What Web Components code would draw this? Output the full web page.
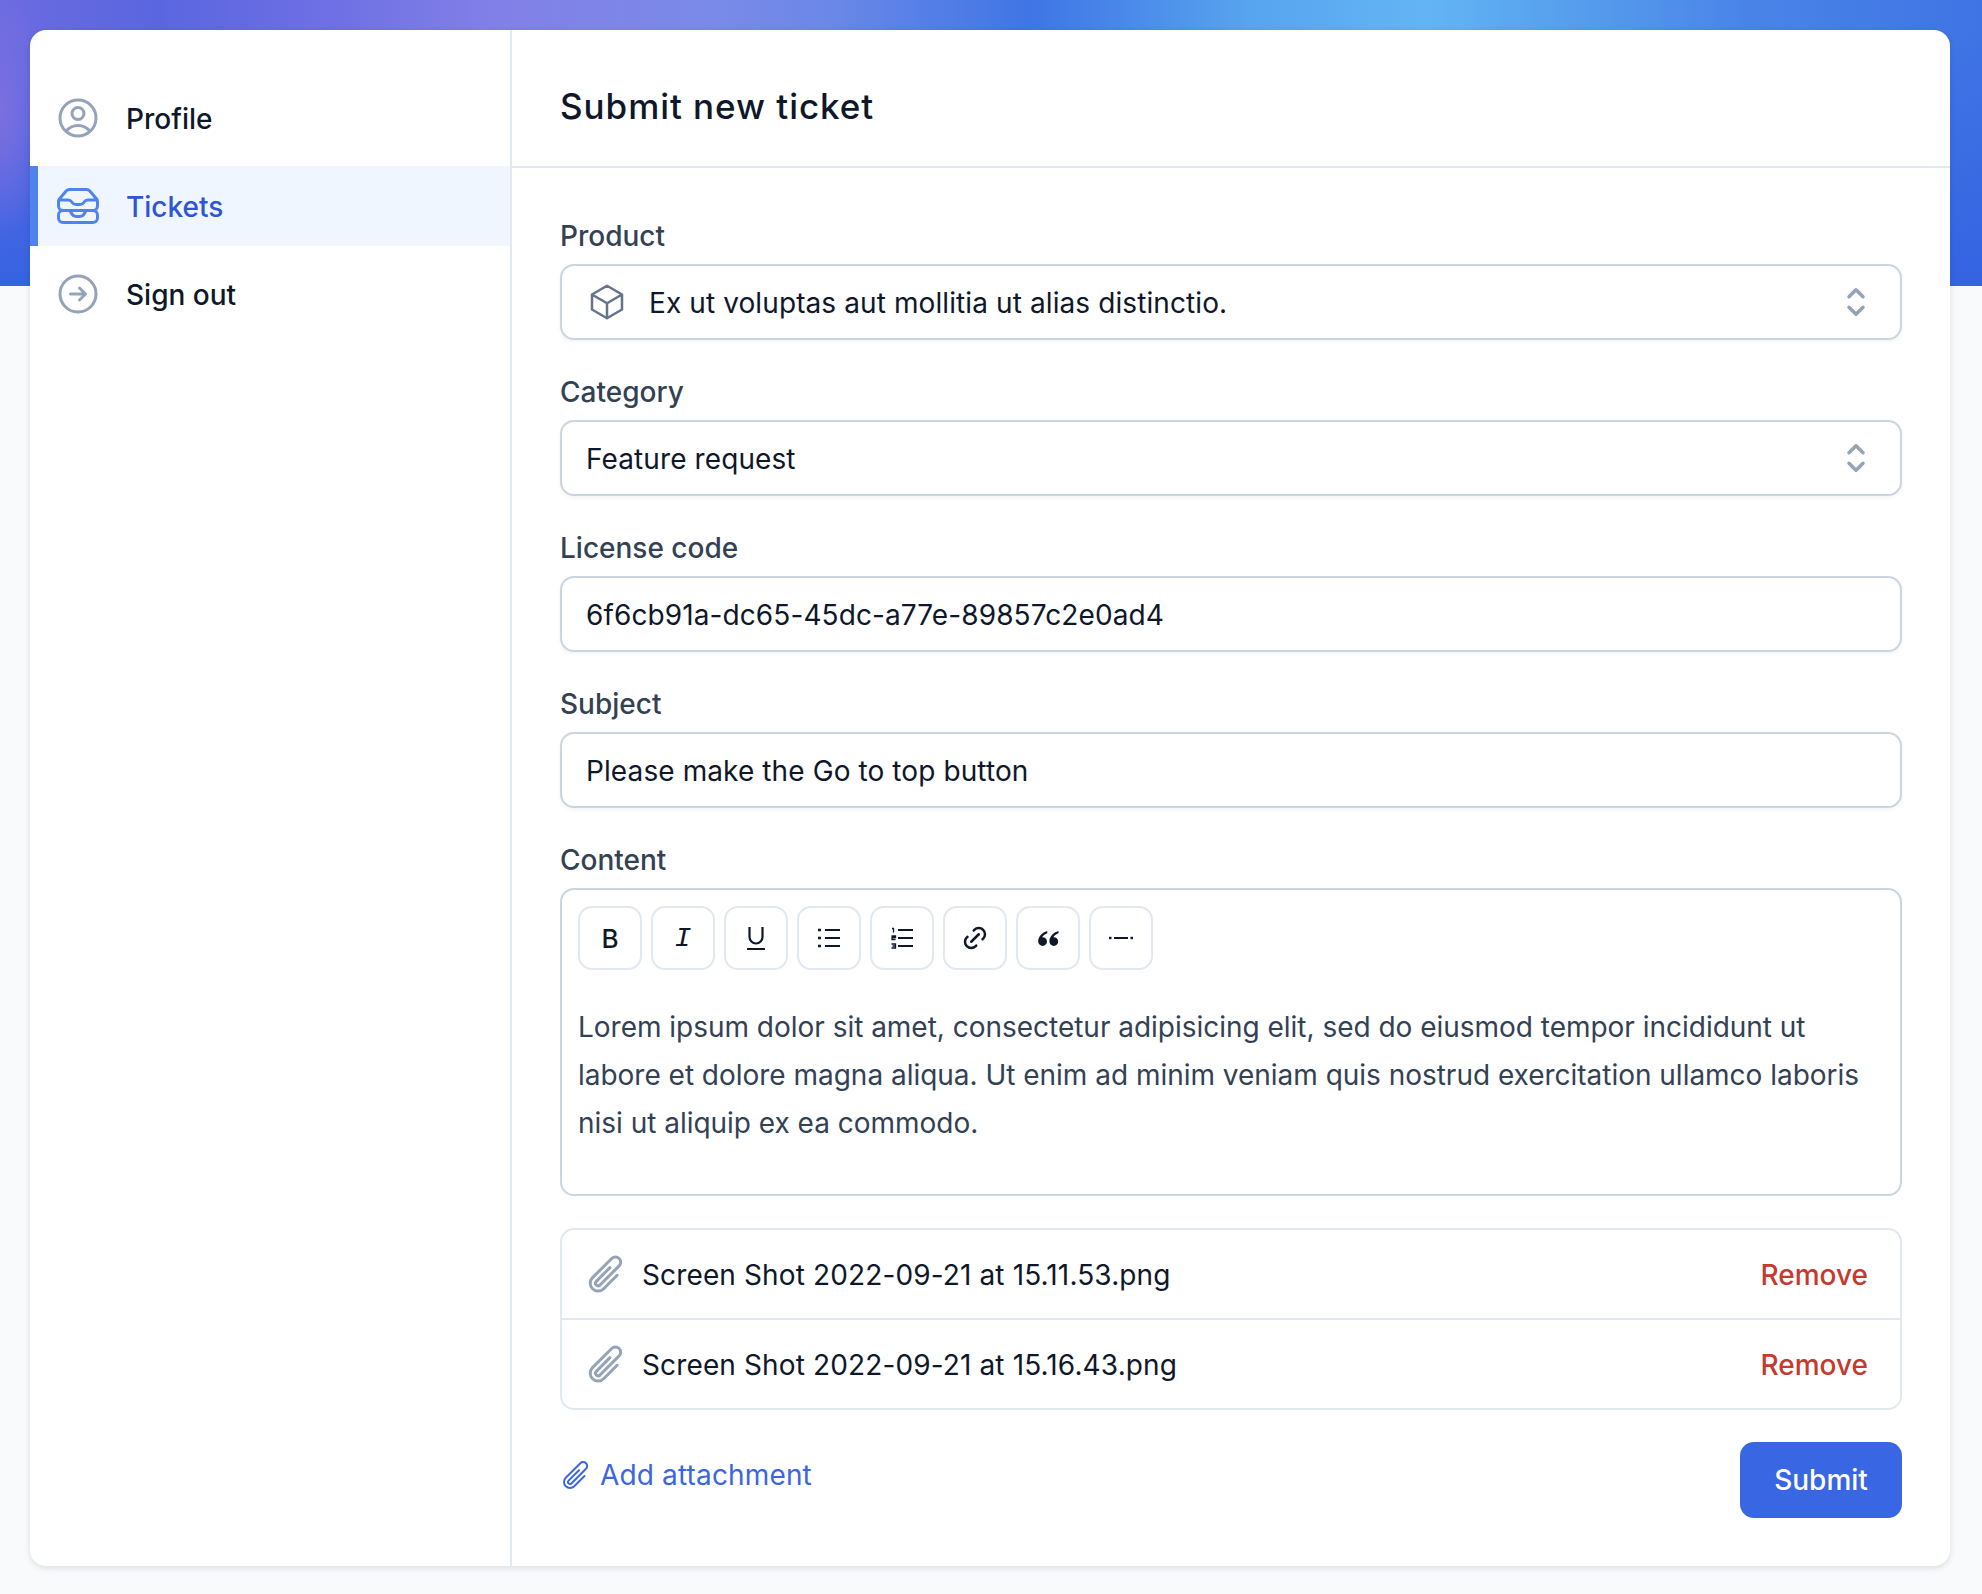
<!DOCTYPE html>
<html lang="en">
<head>
<meta charset="utf-8">
<title>Submit new ticket</title>
<style>
  html, body { margin: 0; padding: 0; }
  body {
    background: #f8fafc;
    font-family: Inter, "Liberation Sans", sans-serif;
    font-size: 28px;
    color: #0f172a;
  }
</style>
</head>
<body>

<ticket-page>
  <side-nav slot="nav">
    <nav-item icon="user">Profile</nav-item>
    <nav-item icon="inbox" active>Tickets</nav-item>
    <nav-item icon="exit">Sign out</nav-item>
  </side-nav>
  <ticket-form slot="main">
    <form-field label="Product">
      <box-input select icon="cube">Ex ut voluptas aut mollitia ut alias distinctio.</box-input>
    </form-field>
    <form-field label="Category">
      <box-input select>Feature request</box-input>
    </form-field>
    <form-field label="License code">
      <box-input>6f6cb91a-dc65-45dc-a77e-89857c2e0ad4</box-input>
    </form-field>
    <form-field label="Subject">
      <box-input>Please make the Go to top button</box-input>
    </form-field>
    <form-field label="Content">
      <rich-editor>Lorem ipsum dolor sit amet, consectetur adipisicing elit, sed do eiusmod tempor incididunt ut labore et dolore magna aliqua. Ut enim ad minim veniam quis nostrud exercitation ullamco laboris nisi ut aliquip ex ea commodo.</rich-editor>
    </form-field>
    <attachment-list>
      <attachment-row>Screen Shot 2022-09-21 at 15.11.53.png</attachment-row>
      <attachment-row>Screen Shot 2022-09-21 at 15.16.43.png</attachment-row>
    </attachment-list>
    <form-actions></form-actions>
  </ticket-form>
</ticket-page>

<script>
const ICONS = {
  user: 'M17.982 18.725A7.488 7.488 0 0012 15.75a7.488 7.488 0 00-5.982 2.975m11.963 0a9 9 0 10-11.963 0m11.963 0A8.966 8.966 0 0112 21a8.966 8.966 0 01-5.982-2.275M15 9.75a3 3 0 11-6 0 3 3 0 016 0z',
  inbox: 'M7.875 14.25l1.214 1.942a2.25 2.25 0 001.908 1.058h2.006c.776 0 1.497-.4 1.908-1.058l1.214-1.942M2.41 9h4.636a2.25 2.25 0 011.872 1.002l.164.246a2.25 2.25 0 001.872 1.002h2.092a2.25 2.25 0 001.872-1.002l.164-.246A2.25 2.25 0 0116.954 9h4.636M2.41 9a2.25 2.25 0 00-.16.832V12a2.25 2.25 0 002.25 2.25h15A2.25 2.25 0 0021.75 12V9.832c0-.287-.055-.57-.16-.832M2.41 9a2.25 2.25 0 01.382-.632l3.285-3.832a2.25 2.25 0 011.708-.786h8.43c.657 0 1.281.287 1.709.786l3.284 3.832c.163.19.291.404.382.632M4.5 20.25h15A2.25 2.25 0 0021.75 18v-1.5a2.25 2.25 0 00-2.25-2.25h-15A2.25 2.25 0 002.25 16.5V18a2.25 2.25 0 002.25 2.25z',
  exit: 'M12.75 15l3-3m0 0l-3-3m3 3h-7.5M21 12a9 9 0 11-18 0 9 9 0 0118 0z',
  cube: 'M21 7.5l-9-5.25L3 7.5m18 0l-9 5.25m9-5.25v9l-9 5.25M3 7.5l9 5.25M3 7.5v9l9 5.25m0-9v9',
  selector: 'M8 9l4-4 4 4m0 6l-4 4-4-4',
  clip: 'M18.375 12.739l-7.693 7.693a4.5 4.5 0 01-6.364-6.364l10.94-10.94A3 3 0 1119.5 7.372L8.552 18.32m.009-.01l-.01.01m5.699-9.941l-7.81 7.81a1.5 1.5 0 002.112 2.13'
};

function icon(name, size, color, width) {
  return `<svg width="${size}" height="${size}" viewBox="0 0 24 24" fill="none" stroke="${color}" stroke-width="${width || 1.5}" stroke-linecap="round" stroke-linejoin="round" style="display:block;flex:none"><path d="${ICONS[name]}"/></svg>`;
}

class Base extends HTMLElement {
  render(html) {
    if (!this.shadowRoot) this.attachShadow({ mode: 'open' });
    this.shadowRoot.innerHTML = html;
  }
}

class TicketPage extends Base {
  connectedCallback() {
    this.render(`
      <style>
        :host { display: block; position: relative; min-height: 1594px; box-sizing: border-box; padding: 30px 32px 28px 30px; }
        .banner {
          position: absolute; left: 0; top: 0; right: 0; height: 286px;
          background:
            radial-gradient(ellipse 50px 130px at 0 110px, #7d6fe0 0%, rgba(125,111,224,0) 100%),
            linear-gradient(180deg, rgba(53,99,226,0) 0, rgba(53,99,226,0) 30px, rgba(53,99,226,1) 100%),
            linear-gradient(90deg, #6b6be0 0%, #5a66e0 8%, #6f70e4 17%, #8280e8 25%, #7a8ae8 36%, #6a88e8 42%, #3f75e5 52%, #4a8aea 57%, #58a4ef 63%, #62b5f5 72%, #58a2ee 78%, #4a84e8 88%, #3f74e4 100%);
        }
        .card {
          position: relative; display: grid; grid-template-columns: 482px 1fr;
          background: #fff; border-radius: 16px; height: 1536px;
          box-shadow: 0 2px 6px rgba(15,23,42,.12); overflow: hidden;
        }
        .nav { border-right: 2px solid #e2e8f0; }
      </style>
      <div class="banner"></div>
      <div class="card">
        <div class="nav"><slot name="nav"></slot></div>
        <div><slot name="main"></slot></div>
      </div>`);
  }
}

class SideNav extends Base {
  connectedCallback() {
    this.render(`
      <style>
        :host { display: flex; flex-direction: column; gap: 8px; padding-top: 48px; }
      </style>
      <slot></slot>`);
  }
}

class NavItem extends Base {
  connectedCallback() {
    const active = this.hasAttribute('active');
    this.render(`
      <style>
        :host { display: flex; align-items: center; gap: 24px; height: 80px; padding-left: 24px; box-sizing: border-box;
          color: ${active ? '#2f55d4' : '#0f172a'}; font: 450 28px Inter, sans-serif;
          background: ${active ? '#eff6ff' : 'transparent'}; position: relative; }
        .bar { position: absolute; left: 0; top: 0; bottom: 0; width: 8px; background: #4f84f0; display: ${active ? 'block' : 'none'}; }
        .t { padding-top: 1px; }
      </style>
      <span class="bar"></span>
      ${icon(this.getAttribute('icon'), 48, active ? '#4f84f0' : '#94a3b8')}
      <span class="t"><slot></slot></span>`);
  }
}

class TicketForm extends Base {
  connectedCallback() {
    this.render(`
      <style>
        :host { display: block; }
        h1 { margin: 0; padding: 48px 48px 32px; font: 450 35px/56px Inter, sans-serif; letter-spacing: .95px; color: #0f172a; border-bottom: 2px solid #e2e8f0; height: 56px; }
        .body { display: flex; flex-direction: column; gap: 32px; padding: 48px 48px 48px; }
      </style>
      <h1>Submit new ticket</h1>
      <div class="body"><slot></slot></div>`);
  }
}

class FormField extends Base {
  connectedCallback() {
    this.render(`
      <style>
        :host { display: flex; flex-direction: column; gap: 8px; }
        label { font: 450 28px/40px Inter, sans-serif; color: #334155; height: 40px; }
      </style>
      <label>${this.getAttribute('label')}</label>
      <slot></slot>`);
  }
}

class BoxInput extends Base {
  connectedCallback() {
    const ic = this.getAttribute('icon');
    this.render(`
      <style>
        :host { display: flex; align-items: center; height: 76px; box-sizing: border-box; padding: 0 23px 0 25px;
          border: 2px solid #cbd5e1; border-radius: 14px; box-shadow: 0 2px 4px rgba(15,23,42,.05);
          font: 400 28px Inter, sans-serif; letter-spacing: .1px; color: #0f172a; background: #fff; }
        .txt { flex: 1; padding-top: 1px; }
        .plain .txt { margin-left: -1px; }
        .lead { margin: 0 22px 0 0; }
      </style>
      ${ic ? `<span class="lead">${icon(ic, 40, '#64748b')}</span>` : ''}
      <span class="txt" style="${ic ? '' : 'margin-left:-1px'}"><slot></slot></span>
      ${this.hasAttribute('select') ? icon('selector', 42, '#94a3b8', 2) : ''}`);
  }
}

class RichEditor extends Base {
  connectedCallback() {
    const k = '#0f172a';
    const tools = [
      `<span style="font:500 26px Inter,sans-serif;color:${k}">B</span>`,
      `<span style="font:italic 400 28px 'Liberation Mono',monospace;color:${k}">I</span>`,
      `<svg width="20" height="24" viewBox="0 0 20 24" fill="none" stroke="${k}" stroke-width="2.200"><path d="M3.500 1v10a6.500 6.500 0 0013 0V1M1 23h18"/></svg>`,
      `<svg width="22" height="20" viewBox="0 0 22 20" fill="none" stroke="${k}" stroke-width="2.200"><path d="M7 2h15M7 10h15M7 18h15"/><path d="M0 2h3M0 10h3M0 18h3" stroke-width="2.500"/></svg>`,
      `<svg width="22" height="22" viewBox="0 0 22 22" fill="none" stroke="${k}" stroke-width="2.200"><path d="M7 3h15M7 11h15M7 19h15"/><path d="M1 1.500h1.500v4M.500 9h4v1.500h-3.500v2h3.500M.500 17h4v2h-3M.500 21h4v-2" stroke-width="1.300"/></svg>`,
      `<svg width="30" height="30" viewBox="0 0 24 24" fill="none" stroke="${k}" stroke-width="2" stroke-linecap="round" stroke-linejoin="round"><path d="M9 15l6-6"/><path d="M11 6l.463-.536a5 5 0 017.071 7.072l-.534.464"/><path d="M13 18l-.397.534a5.068 5.068 0 01-7.127 0 4.972 4.972 0 010-7.071l.524-.463"/></svg>`,
      `<svg width="21" height="15" viewBox="0 0 21 15" fill="${k}"><path d="M9.300 0C4 1.500 .2 5.500 .2 10.500a4.400 4.400 0 108.800 0 4.400 4.400 0 00-4.800-4.300C5 4.400 7 3 9.300 2.200z"/><path d="M20.500 0C15.200 1.500 11.400 5.500 11.400 10.500a4.400 4.400 0 108.800 0 4.400 4.400 0 00-4.800-4.300C16.200 4.400 18.200 3 20.500 2.200z"/></svg>`,
      `<svg width="24" height="4" viewBox="0 0 24 4" fill="${k}"><rect x="5" y="1" width="14" height="2"/><rect x="0" y=".8" width="2.500" height="2.400"/><rect x="21.500" y=".8" width="2.500" height="2.400"/></svg>`
    ].map(t => `<div class="tool">${t}</div>`).join('');
    this.render(`
      <style>
        :host { display: block; box-sizing: border-box; height: 308px; border: 2px solid #cbd5e1; border-radius: 14px; padding: 16px; background: #fff; }
        .bar { display: flex; gap: 9px; margin-bottom: 33px; }
        .tool { width: 64px; height: 64px; box-sizing: border-box; border: 2px solid #e2e8f0; border-radius: 14px; display: flex; align-items: center; justify-content: center; }
        .text { font: 400 28px/48px Inter, sans-serif; letter-spacing: -.02px; color: #334155; }
      </style>
      <div class="bar">${tools}</div>
      <div class="text"><slot></slot></div>`);
  }
}

class AttachmentList extends Base {
  connectedCallback() {
    this.render(`
      <style>
        :host { display: block; border: 2px solid #e2e8f0; border-radius: 14px; overflow: hidden; }
        ::slotted(attachment-row:not(:first-child)) { border-top: 2px solid #e2e8f0; }
      </style>
      <slot></slot>`);
  }
}

class AttachmentRow extends Base {
  connectedCallback() {
    this.render(`
      <style>
        :host { display: flex; align-items: center; height: 88px; padding: 0 32px 0 23px; box-sizing: content-box;
          font: 400 28px Inter, sans-serif; color: #0f172a; }
        .name { flex: 1; margin-left: 15px; letter-spacing: .13px; padding-top: 1px; }
        .rm { color: #c53a2e; font-weight: 450; padding-top: 1px; }
      </style>
      ${icon('clip', 42, '#94a3b8', 1.7)}
      <span class="name"><slot></slot></span>
      <span class="rm">Remove</span>`);
  }
}

class FormActions extends Base {
  connectedCallback() {
    this.render(`
      <style>
        :host { display: flex; justify-content: space-between; align-items: flex-start; font: 450 28px Inter, sans-serif; }
        a { display: flex; align-items: center; gap: 8px; color: #3b66e0; font-weight: 400; height: 66px; letter-spacing: .15px; }
        button { width: 162px; height: 76px; border: 0; border-radius: 14px; background: #3966e3; color: #fff; font: 450 28px Inter, sans-serif; padding: 0; }
      </style>
      <a>${icon('clip', 32, '#3b66e0')}<span>Add attachment</span></a>
      <button>Submit</button>`);
  }
}

customElements.define('ticket-page', TicketPage);
customElements.define('side-nav', SideNav);
customElements.define('nav-item', NavItem);
customElements.define('ticket-form', TicketForm);
customElements.define('form-field', FormField);
customElements.define('box-input', BoxInput);
customElements.define('rich-editor', RichEditor);
customElements.define('attachment-list', AttachmentList);
customElements.define('attachment-row', AttachmentRow);
customElements.define('form-actions', FormActions);
</script>
</body>
</html>
